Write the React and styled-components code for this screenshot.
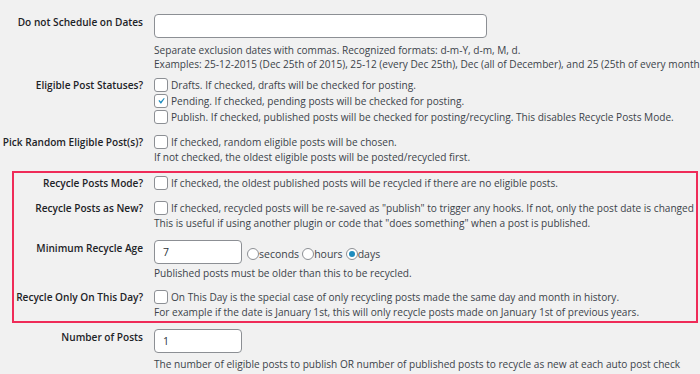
import React from 'react';
import styled, { createGlobalStyle } from 'styled-components';

const GlobalStyle = createGlobalStyle`
    html, body {
        margin: 0;
        padding: 0;
        background: #f1f1f1;
    }
    body {
        font-family: "Open Sans", "Noto Sans", sans-serif;
        font-size: 10.1px;
        color: #3c434a;
        overflow: hidden;
    }
`;

//Styled Components
const Page = styled.div`
    width: 700px;
    height: 374px;
    padding-top: 14px;
    box-sizing: border-box;
    overflow: hidden;
    white-space: nowrap;
`;

const Row = styled.div`
    display: flex;
    align-items: flex-start;
    gap: 11px;
    margin-top: ${props => props.$top || 0}px;
`;

const Label = styled.div`
    width: 143px;
    flex: none;
    text-align: right;
    font-weight: 600;
    color: #1d2327;
    line-height: 16px;
`;

const Highlight = styled.div`
    margin: 7px 2px 0 12px;
    padding: 2px 0;
    border: 2px solid #ef2b58;
    display: flex;
    flex-direction: column;
    gap: 9px;

    ${Label} {
        width: 129px;
    }
`;

const Field = styled.div`
    display: flex;
    flex-direction: column;
    min-width: 0;
`;

const TextInput = styled.div`
    width: ${props => props.$width}px;
    height: 24px;
    box-sizing: border-box;
    background: #fff;
    border: 1px solid #8c8f94;
    border-radius: 4px;
    padding: 0 8px;
    line-height: 22px;
    font-size: 10.5px;
    color: #2c3338;
`;

const Desc = styled.div`
    line-height: 14px;
    margin-top: ${props => props.$top || 0}px;
`;

const CheckLine = styled.label`
    display: flex;
    align-items: center;
    height: 16px;
    gap: 3px;
`;

const Box = styled.span`
    width: 14px;
    height: 14px;
    box-sizing: border-box;
    flex: none;
    background: #fff;
    border: 1px solid #8c8f94;
    border-radius: 3px;
    display: flex;
    align-items: center;
    justify-content: center;
`;

const InlineRow = styled.div`
    display: flex;
    align-items: center;
`;

const RadioGroup = styled.div`
    display: flex;
    align-items: center;
    margin-left: 5px;
    padding-top: 3px;
`;

const RadioOption = styled.label`
    display: flex;
    align-items: center;
    margin-right: 3px;
    font-size: 10.5px;
`;

const RadioCircle = styled.span`
    width: 12px;
    height: 12px;
    box-sizing: border-box;
    border: 1px solid #8c8f94;
    border-radius: 50%;
    background: #fff;
    display: flex;
    align-items: center;
    justify-content: center;

    &::after {
        content: "";
        width: 6px;
        height: 6px;
        border-radius: 50%;
        background: ${props => (props.$on ? '#1e8cbe' : 'transparent')};
    }
`;
//end Styled Components

const Checkbox = ({ checked, children }) => (
    <CheckLine>
        <Box>
            {checked && (
                <svg width="16" height="16" viewBox="0 0 20 20">
                    <path d="M14.83 4.89l1.34.94-5.81 8.38H9.02L5.78 9.67l1.34-1.25 2.57 2.4z" fill="#1e8cbe" />
                </svg>
            )}
        </Box>
        <span>{children}</span>
    </CheckLine>
);

const Radio = ({ on, children }) => (
    <RadioOption>
        <RadioCircle $on={on} />
        {children}
    </RadioOption>
);

const App = () => {
    return (
        <Page>
            <GlobalStyle />
            <Row>
                <Label>Do not Schedule on Dates</Label>
                <Field>
                    <TextInput $width={333} />
                    <Desc $top={5}>Separate exclusion dates with commas. Recognized formats: d-m-Y, d-m, M, d.</Desc>
                    <Desc>Examples: 25-12-2015 (Dec 25th of 2015), 25-12 (every Dec 25th), Dec (all of December), and 25 (25th of every month)</Desc>
                </Field>
            </Row>
            <Row $top={6}>
                <Label>Eligible Post Statuses?</Label>
                <Field>
                    <Checkbox>Drafts. If checked, drafts will be checked for posting.</Checkbox>
                    <Checkbox checked>Pending. If checked, pending posts will be checked for posting.</Checkbox>
                    <Checkbox>Publish. If checked, published posts will be checked for posting/recycling. This disables Recycle Posts Mode.</Checkbox>
                </Field>
            </Row>
            <Row $top={9}>
                <Label>Pick Random Eligible Post(s)?</Label>
                <Field>
                    <Checkbox>If checked, random eligible posts will be chosen.</Checkbox>
                    <Desc>If not checked, the oldest eligible posts will be posted/recycled first.</Desc>
                </Field>
            </Row>
            <Highlight>
                <Row>
                    <Label>Recycle Posts Mode?</Label>
                    <Field>
                        <Checkbox>If checked, the oldest published posts will be recycled if there are no eligible posts.</Checkbox>
                    </Field>
                </Row>
                <Row>
                    <Label>Recycle Posts as New?</Label>
                    <Field>
                        <Checkbox>If checked, recycled posts will be re-saved as "publish" to trigger any hooks. If not, only the post date is changed</Checkbox>
                        <Desc>This is useful if using another plugin or code that "does something" when a post is published.</Desc>
                    </Field>
                </Row>
                <Row $top={1}>
                    <Label>Minimum Recycle Age</Label>
                    <Field>
                        <InlineRow>
                            <TextInput $width={88}>7</TextInput>
                            <RadioGroup>
                                <Radio>seconds</Radio>
                                <Radio>hours</Radio>
                                <Radio on>days</Radio>
                            </RadioGroup>
                        </InlineRow>
                        <Desc $top={2}>Published posts must be older than this to be recycled.</Desc>
                    </Field>
                </Row>
                <Row>
                    <Label>Recycle Only On This Day?</Label>
                    <Field>
                        <Checkbox>On This Day is the special case of only recycling posts made the same day and month in history.</Checkbox>
                        <Desc>For example if the date is January 1st, this will only recycle posts made on January 1st of previous years.</Desc>
                    </Field>
                </Row>
            </Highlight>
            <Row $top={6}>
                <Label>Number of Posts</Label>
                <Field>
                    <TextInput $width={88}>1</TextInput>
                    <Desc $top={4}>The number of eligible posts to publish OR number of published posts to recycle as new at each auto post check</Desc>
                </Field>
            </Row>
        </Page>
    );
};

export default App;
